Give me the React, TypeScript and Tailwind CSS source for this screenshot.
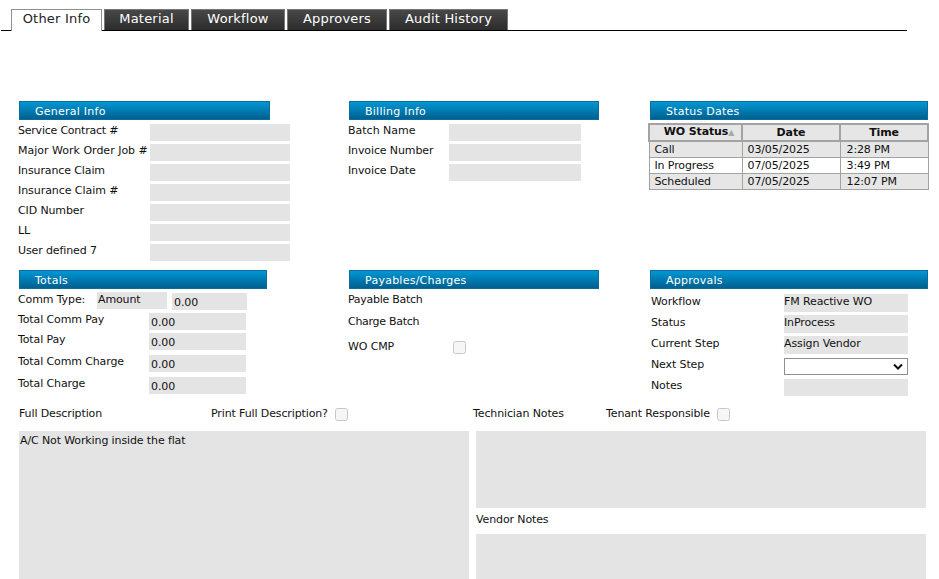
const font = "font-['DejaVu_Sans','Liberation_Sans',sans-serif]";

function SectionHeader({ title, width }: { title: string; width: string }) {
  return (
    <div className={`${width} ml-px h-[19px] border border-[#0a6d9e] bg-gradient-to-b from-[#0097d4] to-[#00608f] pl-[15px] text-[11px] leading-[19px] tracking-[0.25px] text-white`}>
      {title}
    </div>
  );
}

function Field({ label, value, inputWidth, labelWidth, mt = "mt-[3px]", tracking = "" }: { label: string; value?: string; inputWidth: string; labelWidth: string; mt?: string; tracking?: string }) {
  return (
    <div className={`flex h-[17px] ${mt}`}>
      <div className={`${labelWidth} ${tracking} text-[11px] leading-[13px]`}>{label}</div>
      <div className={`${inputWidth} h-[17px] bg-[#e4e4e4] pl-[2px] text-[11px] leading-[19px]`}>{value}</div>
    </div>
  );
}

function Checkbox() {
  return <div className="h-[13px] w-[13px] rounded-[2.5px] border border-[#c8c8c8] bg-[#f6f6f6]"></div>;
}

function Tab({ label, width, active }: { label: string; width: string; active?: boolean }) {
  if (active) {
    return (
      <div className={`${width} relative h-[22px] border border-b-0 border-[#8f8f8f] bg-white text-center text-[13px] leading-[17px] tracking-[0.2px] text-[#222]`}>
        {label}
      </div>
    );
  }
  return (
    <div className={`${width} h-[21px] border border-[#777] border-b-0 bg-gradient-to-b from-[#484848] to-[#2c2c2c] text-center text-[13px] leading-[17px] tracking-[0.2px] text-white`}>
      {label}
    </div>
  );
}

const statusRows = [
  { status: "Call", date: "03/05/2025", time: "2:28 PM", bg: "bg-[#e6e6e6]" },
  { status: "In Progress", date: "07/05/2025", time: "3:49 PM", bg: "bg-white" },
  { status: "Scheduled", date: "07/05/2025", time: "12:07 PM", bg: "bg-[#e6e6e6]" },
];

export default function App() {
  return (
    <div className={`${font} h-[579px] w-[939px] overflow-hidden bg-white tracking-[-0.12px] text-[#111]`}>
      {/* tabs */}
      <div className="ml-px flex h-[31px] w-[906px] items-end gap-[2px] border-b border-black pl-[10px]">
        <div className="-mb-px"><Tab label="Other Info" width="w-[91px]" active /></div>
        <Tab label="Material" width="w-[85px]" />
        <Tab label="Workflow" width="w-[94px]" />
        <Tab label="Approvers" width="w-[100px]" />
        <Tab label="Audit History" width="w-[119px]" />
      </div>

      {/* top row */}
      <div className="mt-[70px] flex h-[169px] pl-[18px]">
        <div className="w-[330px]">
          <SectionHeader title="General Info" width="w-[251px]" />
          <Field label="Service Contract #" inputWidth="w-[140px]" labelWidth="w-[132px]" mt="mt-[4px]" tracking="tracking-[-0.22px]" />
          <Field label="Major Work Order Job #" inputWidth="w-[140px]" labelWidth="w-[132px]" tracking="tracking-normal" />
          <Field label="Insurance Claim" inputWidth="w-[140px]" labelWidth="w-[132px]" />
          <Field label="Insurance Claim #" inputWidth="w-[140px]" labelWidth="w-[132px]" tracking="tracking-[-0.06px]" />
          <Field label="CID Number" inputWidth="w-[140px]" labelWidth="w-[132px]" />
          <Field label="LL" inputWidth="w-[140px]" labelWidth="w-[132px]" />
          <Field label="User defined 7" inputWidth="w-[140px]" labelWidth="w-[132px]" />
        </div>
        <div className="w-[301px]">
          <SectionHeader title="Billing Info" width="w-[250px]" />
          <Field label="Batch Name" inputWidth="w-[132px]" labelWidth="w-[101px]" mt="mt-[4px]" tracking="tracking-normal" />
          <Field label="Invoice Number" inputWidth="w-[132px]" labelWidth="w-[101px]" />
          <Field label="Invoice Date" inputWidth="w-[132px]" labelWidth="w-[101px]" />
        </div>
        <div className="w-[280px]">
          <SectionHeader title="Status Dates" width="w-[278px]" />
          <table className="mt-[3px] -ml-px w-[281px] table-fixed border-collapse text-[11px]">
            <thead>
              <tr className="h-[17px] bg-[#e6e6e6]">
                <th className="w-[93px] border-2 border-[#a3a3a3] p-0 pb-px pl-[7px] text-center leading-[13px]">
                  WO Status<span className="text-[8px] font-normal text-[#aaa]">▲</span>
                </th>
                <th className="w-[98px] border-2 border-[#a3a3a3] p-0 pb-px text-center leading-[13px]">Date</th>
                <th className="border-2 border-[#a3a3a3] p-0 pb-px text-center leading-[13px]">Time</th>
              </tr>
            </thead>
            <tbody>
              {statusRows.map((row) => (
                <tr key={row.status} className={`h-4 ${row.bg}`}>
                  <td className="border border-[#a3a3a3] py-0 pl-[5px] leading-[13px]">{row.status}</td>
                  <td className="border border-[#a3a3a3] py-0 pl-[5px] leading-[13px]">{row.date}</td>
                  <td className="border border-[#a3a3a3] py-0 pl-[6px] leading-[13px]">{row.time}</td>
                </tr>
              ))}
            </tbody>
          </table>
        </div>
      </div>

      {/* middle row */}
      <div className="flex h-[134px] pl-[18px]">
        <div className="w-[330px]">
          <SectionHeader title="Totals" width="w-[248px]" />
          <div className="mt-[3px] flex h-[17px]">
            <div className="w-[79px] text-[11px] leading-[15px]">Comm Type:</div>
            <div className="h-[17px] w-[70px] bg-[#e4e4e4] pl-px text-[11px] leading-[15px]">Amount</div>
            <div className="mt-px ml-[5px] h-[17px] w-[75px] bg-[#e4e4e4] pl-[2px] text-[11px] leading-[19px]">0.00</div>
          </div>
          <Field label="Total Comm Pay" value="0.00" inputWidth="w-[97px]" labelWidth="w-[131px]" mt="mt-[4px]" />
          <Field label="Total Pay" value="0.00" inputWidth="w-[97px]" labelWidth="w-[131px]" />
          <Field label="Total Comm Charge" value="0.00" inputWidth="w-[97px]" labelWidth="w-[131px]" mt="mt-[5px]" />
          <Field label="Total Charge" value="0.00" inputWidth="w-[97px]" labelWidth="w-[131px]" mt="mt-[5px]" />
        </div>
        <div className="w-[301px]">
          <SectionHeader title="Payables/Charges" width="w-[250px]" />
          <div className="mt-[4px] text-[11px] leading-[13px] tracking-[-0.28px]">Payable Batch</div>
          <div className="mt-[9px] text-[11px] leading-[13px] tracking-[-0.28px]">Charge Batch</div>
          <div className="mt-[12px] flex items-start">
            <div className="w-[105px] text-[11px] leading-[13px]">WO CMP</div>
            <div className="mt-px"><Checkbox /></div>
          </div>
        </div>
        <div className="w-[280px]">
          <SectionHeader title="Approvals" width="w-[278px]" />
          <div className="mt-[5px] flex flex-col gap-[3px] pl-[2px] text-[11px]">
            {[["Workflow", "FM Reactive WO"], ["Status", "InProcess"], ["Current Step", "Assign Vendor"]].map(([label, value]) => (
              <div key={label} className="flex h-[18px]">
                <div className="w-[133px] leading-[16px]">{label}</div>
                <div className="h-[18px] w-[124px] bg-[#e4e4e4] leading-[15px]">{value}</div>
              </div>
            ))}
            <div className="flex h-[18px]">
              <div className="w-[133px] leading-[16px]">Next Step</div>
              <div className="relative mt-px h-[17px] w-[124px] border border-[#8f8f8f] bg-white">
                <svg className="absolute right-[4px] top-[4px]" width="10" height="7" viewBox="0 0 10 7" fill="none">
                  <path d="M1 1.5 L5 5.5 L9 1.5" stroke="#111" strokeWidth="2" />
                </svg>
              </div>
            </div>
            <div className="mt-px flex h-[17px]">
              <div className="w-[133px] leading-[13px]">Notes</div>
              <div className="h-[17px] w-[124px] bg-[#e4e4e4]"></div>
            </div>
          </div>
        </div>
      </div>

      {/* notes */}
      <div className="flex pl-[19px]">
        <div className="w-[457px]">
          <div className="flex h-[27px] items-start pt-[3px] text-[11px] leading-[13px]">
            <div className="w-[192px]">Full Description</div>
            <div className="w-[124px]">Print Full Description?</div>
            <div className="mt-px"><Checkbox /></div>
          </div>
          <div className="h-[160px] w-[450px] bg-[#e4e4e4] pl-px text-[11px] leading-[20px]">A/C Not Working inside the flat</div>
        </div>
        <div className="w-[450px]">
          <div className="-ml-[3px] flex h-[27px] items-start pt-[3px] text-[11px] leading-[13px]">
            <div className="w-[133px]">Technician Notes</div>
            <div className="w-[111px]">Tenant Responsible</div>
            <div className="mt-px"><Checkbox /></div>
          </div>
          <div className="h-[77px] bg-[#e4e4e4]"></div>
          <div className="h-[26px] pt-[5px] text-[11px] leading-[13px]">Vendor Notes</div>
          <div className="h-[60px] bg-[#e4e4e4]"></div>
        </div>
      </div>
    </div>
  );
}
